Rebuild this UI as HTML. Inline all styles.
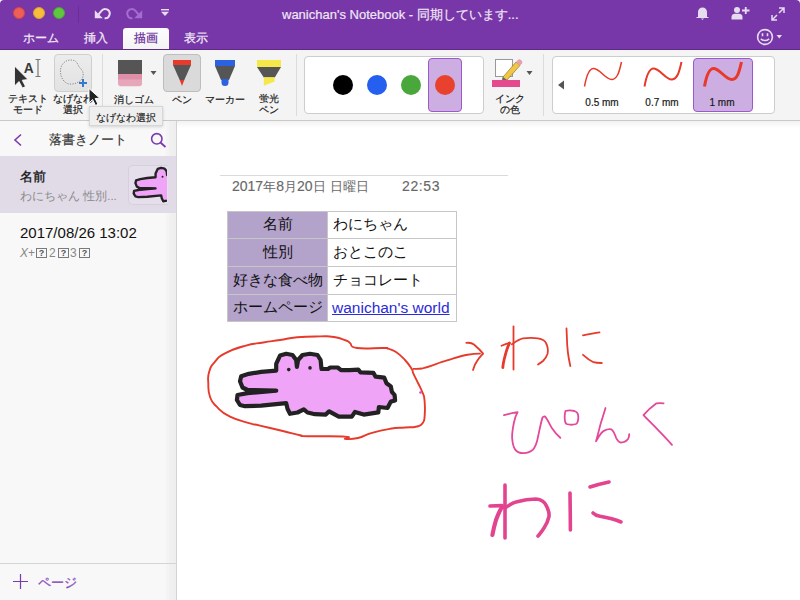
<!DOCTYPE html>
<html><head><meta charset="utf-8">
<style>
*{margin:0;padding:0;box-sizing:border-box}
html,body{width:800px;height:600px;overflow:hidden;background:#fff;font-family:"Liberation Sans",sans-serif;position:relative}
.a{position:absolute}
#hdr{left:0;top:0;width:800px;height:49px;background:#7837a8;border-radius:4px 4px 0 0}
.tl{width:12px;height:12px;border-radius:50%;top:7px}
.tab{top:30px;font-size:12px;color:#f0e8f6;-webkit-text-stroke:0.25px currentColor;white-space:nowrap}
#tbar{left:0;top:49px;width:800px;height:72px;background:#f4f4f4;border-bottom:1px solid #c9c9c9}
.sep{width:1px;background:#dcdcdc}
.lbl{font-size:10px;color:#1a1a1a;-webkit-text-stroke:0.2px #1a1a1a;text-align:center;line-height:10.5px;white-space:nowrap}
#side{left:0;top:121px;width:177px;height:479px;background:linear-gradient(to right,#f8f8f8 0,#f8f8f8 166px,#f4f4f4 166px,#f4f4f4 169px,#f1f1f1 169px,#eeeeee 176px);border-right:1px solid #d2d2d2}
.qb{width:11px;height:10.5px;border:1.5px solid #7a7a7a;font-size:9px;line-height:8.5px;text-align:center;font-weight:bold;color:#555}
#tbl{border-collapse:collapse;font-size:15px;color:#111}
#tbl td{border:1px solid #c6c6c6;height:27.5px;padding:0 5px 1px 5px;white-space:nowrap;background:#fff}
#tbl td.h{background:#b3a2c9;text-align:center;width:100px;padding:0 4px 1px 4px}
#tbl td:nth-child(2){width:129px}
#tbl tr:nth-child(1) td{height:27px}#tbl tr:nth-child(2) td,#tbl tr:nth-child(3) td{height:28px}#tbl tr:nth-child(4) td{height:27px}
.j{font-size:12.5px;-webkit-text-stroke:0}
</style></head><body>
<div id="hdr" class="a"></div>
<div class="a tl" style="left:13px;background:#ee5f57;border:1px solid #d9453d"></div>
<div class="a tl" style="left:33px;background:#f6be3b;border:1px solid #dba32c"></div>
<div class="a tl" style="left:53px;background:#5fc73f;border:1px solid #4aa92e"></div>
<div class="a" style="left:78px;top:6px;width:1px;height:17px;background:#6a2e96"></div>
<div class="a" style="left:282px;top:6px;font-size:13px;color:#efe6f5;white-space:nowrap;-webkit-text-stroke:0.2px #efe6f5">wanichan's Notebook - 同期しています...</div>

<!-- title icons -->
<svg class="a" style="left:93px;top:5px" width="18" height="16" viewBox="0 0 18 16">
  <path d="M5.5 9.5 L8.2 6.2 A4.6 4.6 0 1 1 11.6 13.2" fill="none" stroke="#e8dcf0" stroke-width="2"/>
  <path d="M1.8 5.2 V13.2 H9.8 Z" fill="#e8dcf0"/>
</svg>
<svg class="a" style="left:126px;top:5px" width="18" height="16" viewBox="0 0 18 16">
  <path d="M12.5 9.5 L9.8 6.2 A4.6 4.6 0 1 0 6.4 13.2" fill="none" stroke="#a26dcc" stroke-width="2"/>
  <path d="M16.2 5.2 V13.2 H8.2 Z" fill="#a26dcc"/>
</svg>
<svg class="a" style="left:160px;top:8px" width="10" height="9" viewBox="0 0 10 9">
  <rect x="1" y="1" width="8" height="1.4" fill="#e8dcf0"/>
  <path d="M1 3.8 H9 L5 8 Z" fill="#e8dcf0"/>
</svg>
<svg class="a" style="left:696px;top:6px" width="13" height="15" viewBox="0 0 13 15">
  <path d="M2 11 V6 A4.5 4.5 0 0 1 11 6 V11 H12.5 V12 H0.5 V11 Z" fill="#e6dcef"/>
  <path d="M5 12.5 H8 L6.5 14 Z" fill="#e6dcef"/>
</svg>
<svg class="a" style="left:731px;top:6px" width="19" height="14" viewBox="0 0 19 14">
  <circle cx="6" cy="4" r="3" fill="#e6dcef"/>
  <path d="M0.5 13.5 V11 Q0.5 8 4 7.8 H8 Q11.5 8 11.5 11 V13.5 Z" fill="#e6dcef"/>
  <path d="M11 4.5 H18.5 M14.75 1 V8" stroke="#e6dcef" stroke-width="1.8"/>
</svg>
<svg class="a" style="left:771px;top:6.5px" width="14" height="14" viewBox="0 0 14 14">
  <path d="M8 1 H13 V6 M13 1 L8 6 M6 13 H1 V8 M1 13 L6 8" fill="none" stroke="#e6dcef" stroke-width="1.5"/>
</svg>
<svg class="a" style="left:755px;top:28px" width="30" height="18" viewBox="0 0 30 18">
  <circle cx="10" cy="9" r="7.4" fill="none" stroke="#e6dcef" stroke-width="1.6"/>
  <path d="M7.5 5.3 V8.3 M12.5 5.3 V8.3" stroke="#e6dcef" stroke-width="1.6"/>
  <path d="M5.8 10.8 Q10 14.2 14.2 10.8" fill="none" stroke="#e6dcef" stroke-width="1.5"/>
  <path d="M21.5 7 H27 L24.25 10.5 Z" fill="#e6dcef"/>
</svg>
<!-- tabs -->
<div class="a tab" style="left:23px">ホーム</div>
<div class="a tab" style="left:84px">挿入</div>
<div class="a" style="left:123px;top:28px;width:46px;height:22px;background:linear-gradient(#fdfdfd,#f3f3f3);border-radius:3px 3px 0 0"></div>
<div class="a tab" style="left:134px;color:#6b2f9c">描画</div>
<div class="a tab" style="left:184px">表示</div>

<div id="tbar" class="a"></div>

<!-- toolbar content -->
<div class="a" style="left:0;top:49px;width:800px;height:1px;background:#5e2a86"></div>
<svg class="a" style="left:10px;top:56px" width="36" height="36" viewBox="0 0 36 36">
  <path d="M4.5 10 L4.5 30 L9 25.5 L12.5 32 L15.5 30.5 L12.2 24.2 L18 23.5 Z" fill="#333" stroke="#fff" stroke-width="0.8"/>
  <text x="14.6" y="16.6" font-family="Liberation Sans" font-size="14.5" font-weight="bold" fill="#3a3a3a" transform="scale(0.95,1)">A</text>
  <path d="M25.5 3.5 h5 M28 3.5 v17 M25.5 20.5 h5" stroke="#777" stroke-width="1.2" fill="none"/>
</svg>
<div class="a lbl" style="left:6px;top:94px;width:44px">テキスト<br>モード</div>
<div class="a" style="left:54px;top:54px;width:38px;height:38px;border:1px solid #cfcfcf;border-radius:4px;background:linear-gradient(#ececec,#e2e2e2)"></div>
<svg class="a" style="left:54px;top:54px" width="38" height="38" viewBox="0 0 38 38">
  <path d="M10 27 C6 23 5.5 15 8 11 C11 6 17 5 21 7 C24 9 24 12 26 14 C29 16.5 30 20 28.5 24 C26 28.5 20 30.5 15 30 C13 29.8 11.5 28.5 10 27 Z" fill="none" stroke="#888" stroke-width="1" stroke-dasharray="1.2 1.3"/>
  <path d="M25 29 h8 M29 25 v8" stroke="#3a78c8" stroke-width="2"/>
</svg>
<div class="a lbl" style="left:50px;top:94px;width:46px">なげなわ<br>選択</div>
<div class="a sep" style="left:102px;top:54px;height:58px"></div>
<!-- eraser -->
<svg class="a" style="left:118px;top:59.5px" width="25" height="27" viewBox="0 0 25 27">
  <path d="M0 0 H24 V14 H0 Z" fill="#555"/>
  <path d="M0 14 H24 V23.5 Q24 26.3 21 26.3 H3 Q0 26.3 0 23.5 Z" fill="#e6a7bb"/>
  <path d="M0 14 H24 V19.5 H0 Z" fill="#df8fa8"/>
</svg>
<svg class="a" style="left:150px;top:70px" width="7" height="6" viewBox="0 0 7 6"><path d="M0.5 1 H6.5 L3.5 5 Z" fill="#555"/></svg>
<div class="a lbl" style="left:110px;top:95px;width:48px">消しゴム</div>
<!-- pen selected -->
<div class="a" style="left:163px;top:54px;width:38px;height:38px;border:1px solid #bdbdbd;border-radius:4px;background:#dadada"></div>
<svg class="a" style="left:170px;top:59px" width="24" height="28" viewBox="0 0 24 28">
  <path d="M3 1 H21 V6 H3 Z" fill="#e8392a"/>
  <path d="M3 6 H21 L14.3 21 H9.7 Z" fill="#555"/>
  <path d="M9.7 21 H14.3 L12 27 Z" fill="#e8392a"/>
</svg>
<div class="a lbl" style="left:162px;top:95px;width:40px">ペン</div>
<!-- marker -->
<svg class="a" style="left:213px;top:59px" width="24" height="28" viewBox="0 0 24 28">
  <path d="M2 1 H22 V7 H2 Z" fill="#2a62e0"/>
  <path d="M2 7 H22 L16 21 H8 Z" fill="#555"/>
  <path d="M8.5 20 H15.5 V23.5 A3.5 3.5 0 0 1 8.5 23.5 Z" fill="#2a62e0"/>
</svg>
<div class="a lbl" style="left:203px;top:95px;width:44px">マーカー</div>
<!-- highlighter -->
<svg class="a" style="left:256px;top:59px" width="26" height="28" viewBox="0 0 26 28">
  <path d="M1 1 H25 V8 H1 Z" fill="#f5e84a"/>
  <path d="M1 8 H25 L18.8 18.5 H7.8 Z" fill="#555"/>
  <path d="M7.8 18.3 H18.6 V22.6 L7.8 26.8 Z" fill="#f5e84a"/>
</svg>
<div class="a lbl" style="left:249px;top:94px;width:40px">蛍光<br>ペン</div>
<div class="a sep" style="left:296px;top:54px;height:62px"></div>
<!-- colors panel -->
<div class="a" style="left:304px;top:56px;width:180px;height:58px;background:#fff;border:1px solid #cdcdcd;border-radius:4px"></div>
<div class="a" style="left:333px;top:75px;width:20px;height:20px;border-radius:50%;background:#000"></div>
<div class="a" style="left:367px;top:75px;width:20px;height:20px;border-radius:50%;background:#245ff0"></div>
<div class="a" style="left:401px;top:75px;width:20px;height:20px;border-radius:50%;background:#4aa73c"></div>
<div class="a" style="left:428px;top:58px;width:34px;height:54px;border-radius:4px;background:#cdaee2;border:1px solid #9b59c9"></div>
<div class="a" style="left:435px;top:75px;width:20px;height:20px;border-radius:50%;background:#e8412e"></div>
<!-- ink color -->
<svg class="a" style="left:490px;top:57px" width="36" height="32" viewBox="0 0 36 32">
  <rect x="5.5" y="2.5" width="17" height="17" fill="#fff" stroke="#999" stroke-width="1"/>
  <path d="M13 20 L26 5 L30 8.5 L17 23 L12 24.5 Z" fill="#f3c640" stroke="#7a6a40" stroke-width="0.6"/>
  <path d="M26 5 L28 2.8 Q29.5 1.8 31 3 L32 4 Q32.8 5.5 32 6.5 L30 8.5 Z" fill="#e7a0b0"/>
  <path d="M13 20 L17 23 L12 24.5 Z" fill="#666"/>
  <rect x="2" y="23" width="28" height="7" fill="#e34b8e"/>
</svg>
<svg class="a" style="left:526px;top:70px" width="7" height="6" viewBox="0 0 7 6"><path d="M0.5 1 H6.5 L3.5 5 Z" fill="#555"/></svg>
<div class="a lbl" style="left:490px;top:94px;width:40px">インク<br>の色</div>
<div class="a sep" style="left:543px;top:54px;height:62px"></div>
<!-- width panel -->
<div class="a" style="left:552px;top:56px;width:223px;height:58px;background:#fff;border:1px solid #cdcdcd;border-radius:4px"></div>
<svg class="a" style="left:557px;top:80px" width="8" height="10" viewBox="0 0 8 10"><path d="M7 0.5 V9.5 L1 5 Z" fill="#555"/></svg>
<svg class="a" style="left:580px;top:58px" width="50" height="32" viewBox="0 0 50 32">
  <path d="M4.5 28.5 C6 20 9 10 14 10.5 C20 11 26 22 32 21.5 C38 21 39.5 12 41.5 4" fill="none" stroke="#e8392a" stroke-width="1.5"/>
</svg>
<div class="a lbl" style="left:580px;top:98px;width:44px">0.5 mm</div>
<svg class="a" style="left:640px;top:58px" width="50" height="32" viewBox="0 0 50 32">
  <path d="M4.5 28.5 C6 20 9 10 14 10.5 C20 11 26 22 32 21.5 C38 21 39.5 12 41.5 4" fill="none" stroke="#e8392a" stroke-width="2"/>
</svg>
<div class="a lbl" style="left:640px;top:98px;width:44px">0.7 mm</div>
<div class="a" style="left:693px;top:58px;width:60px;height:54px;border-radius:4px;background:#cdaee2;border:1px solid #9b59c9"></div>
<svg class="a" style="left:700px;top:58px" width="50" height="32" viewBox="0 0 50 32">
  <path d="M4.5 28.5 C6 20 9 10 14 10.5 C20 11 26 22 32 21.5 C38 21 39.5 12 41.5 4" fill="none" stroke="#e8392a" stroke-width="3"/>
</svg>
<div class="a lbl" style="left:700px;top:98px;width:44px">1 mm</div>
<div id="side" class="a"></div>
<div class="a" style="left:177px;top:121px;width:623px;height:7px;background:linear-gradient(#f2f2f2,#fff)"></div>


<!-- canvas -->
<div class="a" style="left:220px;top:175px;width:288px;height:1px;background:#dadada"></div>
<div class="a" style="left:232px;top:177.5px;font-size:14px;color:#686868;white-space:nowrap;-webkit-text-stroke:0.15px #686868">2017<span class="j">年</span>8<span class="j">月</span>20<span class="j">日</span><span class="j" style="margin-left:4px;letter-spacing:0.2px">日曜日</span></div>
<div class="a" style="left:402px;top:177.5px;font-size:14px;color:#686868;white-space:nowrap;-webkit-text-stroke:0.15px #686868;letter-spacing:0.6px">22:53</div>
<table class="a" id="tbl" style="left:227px;top:211px">
<tr><td class="h">名前</td><td>わにちゃん</td></tr>
<tr><td class="h">性別</td><td>おとこのこ</td></tr>
<tr><td class="h">好きな食べ物</td><td>チョコレート</td></tr>
<tr><td class="h">ホームページ</td><td><span style="color:#2b2bd8;text-decoration:underline;font-size:15.5px;position:relative;left:-1px">wanichan's world</span></td></tr>
</table>
<svg class="a" style="left:0;top:0" width="800" height="600" viewBox="0 0 800 600">
 <g fill="none" stroke-linecap="round" stroke-linejoin="round">
  <!-- lasso -->
  <path d="M411.7 369.0 C409.5 365.5 409.2 364.5 405.0 360.0 C400.8 355.5 400.5 355.0 396.0 352.0 C391.5 349.0 391.4 349.8 388.0 348.7 C384.6 347.6 391.6 348.2 383.3 348.0 C375.0 347.8 365.9 349.3 357.0 348.0 C348.1 346.7 352.9 345.0 350.0 343.0 C347.1 341.0 350.3 342.1 346.0 340.5 C341.7 338.9 340.9 338.1 334.0 337.0 C327.1 335.9 329.8 336.3 320.0 336.4 C310.2 336.5 307.9 336.3 297.2 337.3 C286.5 338.3 289.0 338.6 280.0 340.0 C271.0 341.4 272.6 341.0 263.3 342.5 C254.0 344.0 255.2 342.9 245.0 345.8 C234.8 348.7 233.0 349.1 225.0 353.3 C217.0 357.5 219.2 356.8 215.0 361.7 C210.8 366.6 211.0 365.9 209.2 371.7 C207.4 377.5 208.1 376.6 208.3 383.3 C208.5 390.0 207.8 390.5 210.0 396.7 C212.2 402.9 211.4 401.4 216.7 406.7 C222.0 412.0 221.1 412.3 230.0 416.7 C238.9 421.1 242.0 420.9 250.0 423.3 C258.0 425.7 251.3 423.5 260.0 425.6 C268.7 427.7 272.1 428.4 282.8 431.0 C293.4 433.6 293.5 433.9 300.0 435.3 C306.5 436.7 295.3 435.9 307.3 436.2 C319.3 436.6 334.8 435.9 345.0 436.6 C355.2 437.3 342.0 438.5 345.5 438.9 C349.0 439.3 350.9 439.6 358.0 438.0 C365.1 436.4 363.5 435.2 372.0 432.8 C380.5 430.3 381.2 430.2 390.0 428.8 C398.8 427.4 398.1 428.1 405.0 427.5 C411.9 426.9 411.1 427.8 415.8 426.7 C420.5 425.6 420.1 426.4 422.5 423.3 C424.9 420.2 424.2 421.2 424.7 415.0 C425.2 408.8 425.1 406.0 424.5 400.0 C423.9 394.0 424.2 397.0 422.5 392.5 C420.8 388.0 420.5 388.1 418.0 383.0 C415.5 377.9 415.0 377.0 413.3 373.3 C411.6 369.6 413.9 372.5 411.7 369.0 Z" stroke="#e63b2c" stroke-width="1.9"/>
  <!-- arrow -->
  <path d="M413.4 368.8 C416 369 419 369 422 368.5 C430 366.5 438 363 447 360.4 C455 358 460 356 466 355 C472 354 476 353.6 480 353.6" stroke="#e63b2c" stroke-width="1.8"/>
  <path d="M466.3 342.9 C469 342.5 472 343 474 344.5 C478 348 481 351 483.1 353.6 C481 356 479 358 477.5 360.4 C475.5 363 474 366 473 370" stroke="#e63b2c" stroke-width="1.8"/>
  <!-- red wani -->
  <path d="M513.5 326.5 V369.5" stroke="#e63b2c" stroke-width="1.8"/>
  <path d="M501.5 345.7 C504 344.5 506.5 343.5 509.5 342.8" stroke="#e63b2c" stroke-width="1.8"/>
  <path d="M509.5 343 C507.5 347 505.5 354 504 360 C503.3 363 503 365.5 502.8 367.5" stroke="#e63b2c" stroke-width="2.8"/>
  <path d="M511.8 344.3 C515 342 519 339 523 338.3 C528 337.8 534 337.8 538 338.3 C542 339 545 340.5 546 343 C548 347 548 352 547.5 354 C546.5 357 545 359 543 361 C541 362.5 539.5 363.5 538 364.5" stroke="#e63b2c" stroke-width="1.8"/>
  <path d="M566.5 328.5 C566.8 335 567 340 567.2 345 C567.6 350 568 354 568.8 358.5 C569.3 361 569.8 363.5 570.3 366" stroke="#e63b2c" stroke-width="1.8"/>
  <path d="M583 335.3 C589 334 594 333 599.5 332.3" stroke="#e63b2c" stroke-width="1.8"/>
  <path d="M583 354.8 C586 357.5 590 360.5 593.5 362.2 C596 363 599 363 601.8 363" stroke="#e63b2c" stroke-width="1.8"/>
  <!-- pink pinku -->
  <path d="M504 415.2 C508 414 512 412.8 517.6 412.1 C516 415 514.8 418 514 422.3 C512.8 428 512 433 512.1 437.8 C512.5 443 513.2 447 515.2 449.6 C517.5 452.5 520 453.2 523.5 453.2 C527.5 453 530.5 452 533 449.6 C535.5 446.5 537 442 537.8 437.8 C539.5 430 541 422 542.5 417.6 C543 416.8 544 416.3 544.9 416.4 C547 418.5 549.5 424 552 428.3 C554.5 432 557 435 560.3 437.8" stroke="#e4489a" stroke-width="1.8"/>
  <path d="M565.5 411 C568 410.3 572 410.5 574.5 411 C577.5 411.8 578.3 414 578.3 417 C578.3 420 578 423 576 424 C573 425 569 424.8 566.5 424 C564.8 422.5 564.6 419 564.7 416 C564.8 414 565 412.3 565.5 411" stroke="#e4489a" stroke-width="1.8"/>
  <path d="M605.5 408 C604 413 602.5 418 600.7 423.5 C599 430 597.5 436 596 441.3 C598.5 437 601 432 604.3 430.6 C607 429.2 610 429 611.4 429.4 C613.5 431 615 434.5 616.1 437.8 C617.5 440.5 619 442.3 620.9 442.5 C624 442.5 626.5 441 628 439 C628.8 437.5 629.2 435.5 629.2 434.2" stroke="#e4489a" stroke-width="1.8"/>
  <path d="M663.6 403.3 C661 403 658.5 403 656.5 403.3 C652 406.5 647 411 643.5 415.2 C647.5 419.5 652 423.8 656.5 428.3 C661.5 433.5 667 439 672 444.9" stroke="#e4489a" stroke-width="1.8"/>
  <!-- pink wani -->
  <path d="M505 485 V538" stroke="#e3448f" stroke-width="3.6"/>
  <path d="M490 506 C494 505.7 498 505.6 502 505.6" stroke="#e3448f" stroke-width="3.6"/>
  <path d="M502 507 C499.5 511 497.5 516 496 520 C494.5 525 493.3 530 492.4 535" stroke="#e3448f" stroke-width="4.2"/>
  <path d="M505 508 C508.5 505.5 512 503 516 502 C522 500.3 530 499 536 499 C541 499.5 545 502.5 546.5 506 C548.5 510 549.5 513 549 516.5 C548 521 546 525 544 528 C542 531 540 534 538 536" stroke="#e3448f" stroke-width="3.6"/>
  <path d="M570 493 C570.2 505 570.3 518 570.4 530" stroke="#e3448f" stroke-width="3.6"/>
  <path d="M590 487 C596 485 602 483.5 609 482" stroke="#e3448f" stroke-width="3.6"/>
  <path d="M593 513 C595 515 597.5 516 600 516.3 C607 517.5 614 519 621 522" stroke="#e3448f" stroke-width="3.6"/>
 </g>
 <circle cx="420.5" cy="392.5" r="1.3" fill="#e040d0"/>
 <g id="croc">
  <path d="M240.0 381.2 L241.2 376.2 L248.8 373.8 L261.2 371.9 L276.2 370.6 L276.2 363.8 L280.0 355.6 L286.2 353.8 L292.5 355.0 L296.2 360.0 L296.9 366.9 L298.1 360.0 L302.5 355.0 L310.0 353.8 L317.5 355.0 L320.6 360.0 L321.5 369.0 L328.0 369.0 L330.2 367.5 L337.7 367.5 L341.0 370.2 L349.6 370.2 L358.3 369.6 L360.5 372.3 L373.5 372.9 L375.6 376.7 L384.3 377.7 L386.5 383.2 L390.8 386.4 L391.9 391.8 L394.6 395.0 L395.1 400.5 L390.8 401.6 L387.5 408.0 L378.9 407.0 L378.3 412.4 L363.7 414.6 L355.0 411.9 L351.8 416.7 L338.8 416.7 L329.1 411.3 L325.8 414.6 L315.0 414.2 L307.5 412.5 L303.8 409.4 L297.5 412.5 L290.0 413.8 L287.5 408.8 L286.2 403.1 L261.2 405.6 L245.0 406.2 L240.0 405.0 L236.9 400.0 L237.5 395.0 L247.5 393.1 L276.2 390.6 L247.5 390.0 L242.5 387.5 Z" fill="#f0a4f8" stroke="#222" stroke-width="4.2" stroke-linejoin="round"/>
  <path d="M244 388.6 L277 389.6 L277 391.6 L246 394.2 Z" fill="#222"/>
  <circle cx="288.75" cy="369.6" r="1.8" fill="#222"/>
  <circle cx="310" cy="367.9" r="1.8" fill="#222"/>
 </g>
</svg>
<!-- sidebar -->
<svg class="a" style="left:12px;top:133px" width="12" height="14" viewBox="0 0 12 14"><path d="M9 1.5 L3 7 L9 12.5" fill="none" stroke="#7b3bb0" stroke-width="1.6"/></svg>
<div class="a" style="left:49px;top:131px;font-size:13px;color:#333;white-space:nowrap;-webkit-text-stroke:0.15px #333">落書きノート</div>
<svg class="a" style="left:150px;top:132px" width="17" height="16" viewBox="0 0 17 16"><circle cx="6.8" cy="6.8" r="5.2" fill="none" stroke="#7b3bb0" stroke-width="1.6"/><path d="M10.5 10.5 L15.5 15" stroke="#7b3bb0" stroke-width="1.8"/></svg>
<div class="a" style="left:0;top:156px;width:176px;height:57px;background:#e1dbe8"></div>
<div class="a" style="left:20px;top:168px;font-size:13px;color:#111;white-space:nowrap;-webkit-text-stroke:0.3px #111">名前</div>
<div class="a" style="left:20px;top:189px;font-size:11.5px;color:#8a8a8a;white-space:nowrap">わにちゃん&nbsp;性別...</div>
<div class="a" style="left:128px;top:165px;width:40px;height:40px;border:1px solid #d6d0dc;border-right:none;border-radius:5px 0 0 5px;background:#e4dfea"></div>
<div class="a" style="left:20px;top:224px;font-size:15px;color:#111;white-space:nowrap">2017/08/26 13:02</div>
<div class="a" style="left:20px;top:246px;font-size:12px;color:#888;white-space:nowrap"><i>X</i>+</div>
<div class="a qb" style="left:36px;top:247.5px">?</div>
<div class="a" style="left:49px;top:246px;font-size:12px;color:#888">2</div>
<div class="a qb" style="left:58px;top:247.5px">?</div>
<div class="a" style="left:70px;top:246px;font-size:12px;color:#888">3</div>
<div class="a qb" style="left:79px;top:247.5px">?</div>
<div class="a" style="left:0;top:563px;width:176px;height:1px;background:#d4d4d4"></div>
<svg class="a" style="left:13px;top:574px" width="15" height="15" viewBox="0 0 15 15"><path d="M0 7.5 H15 M7.5 0 V15" stroke="#7b3bb0" stroke-width="1.2"/></svg>
<div class="a" style="left:38px;top:574px;font-size:13px;color:#8a50c0;white-space:nowrap;-webkit-text-stroke:0.3px #8a50c0">ページ</div>
<svg class="a" style="left:129px;top:166px" width="38" height="38" viewBox="0 0 38 38">
 <g transform="translate(-127,-194.8) scale(0.556)"><use href="#croc"/></g>
</svg>
<!-- tooltip -->
<div class="a" style="left:89px;top:106px;width:74px;height:20px;background:#efefef;border:1px solid #d6d6d6;box-shadow:0 1px 3px rgba(0,0,0,0.15);font-size:10px;color:#1a1a1a;padding:4px 0 0 6px;white-space:nowrap;-webkit-text-stroke:0.15px #1a1a1a">なげなわ選択</div>
<!-- cursor -->
<svg class="a" style="left:87px;top:86.5px" width="16" height="20" viewBox="0 0 16 20">
  <path d="M2 1.5 V16 L5.5 12.5 L8.5 18.5 L11 17.3 L8.2 11.5 L12.8 11.2 Z" fill="#222" stroke="#fff" stroke-width="1"/>
</svg>
</body></html>
